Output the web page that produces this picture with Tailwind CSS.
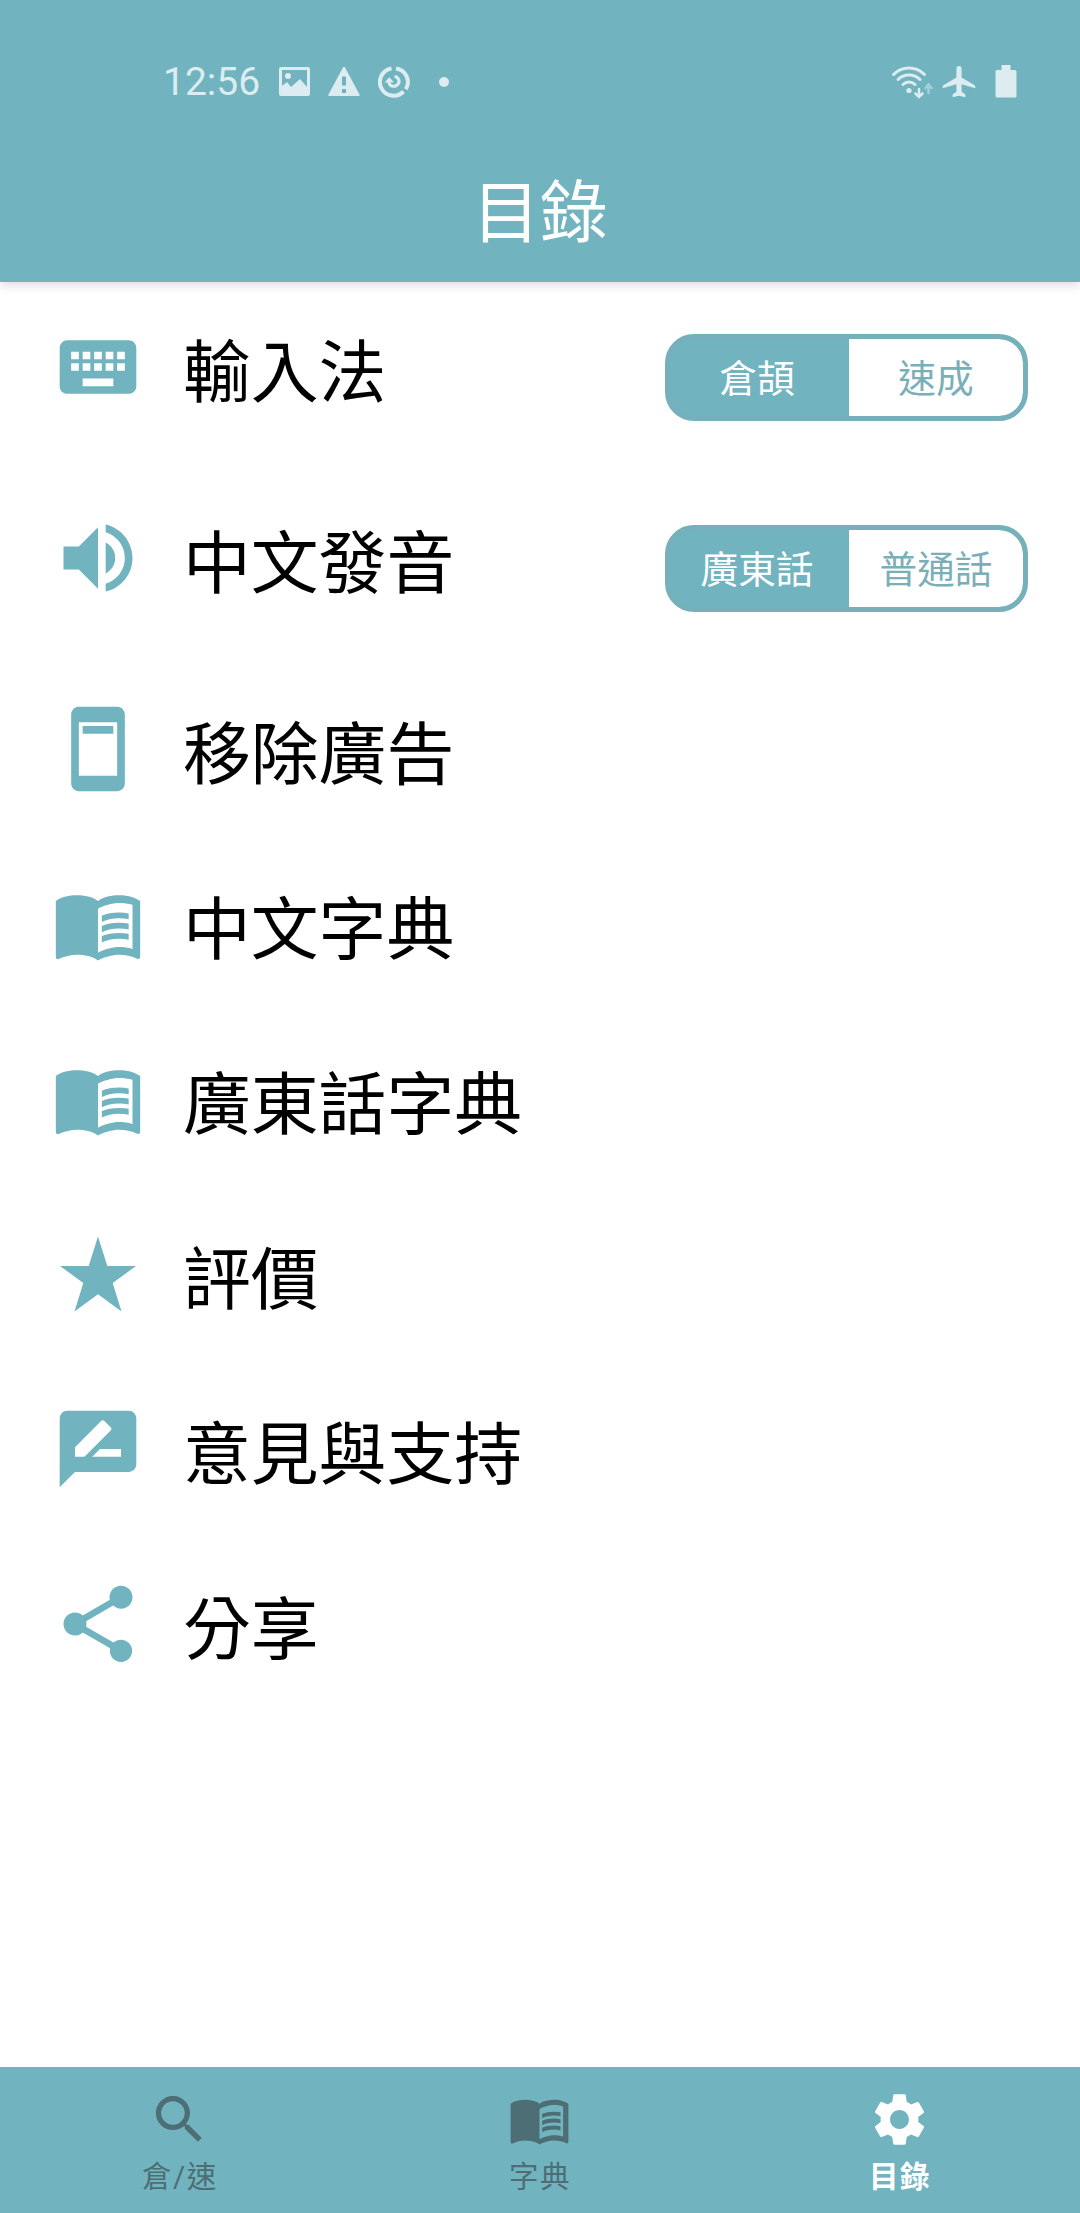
<!DOCTYPE html>
<html lang="zh-Hant">
<head>
  <meta charset="UTF-8" />
  <meta name="viewport" content="width=device-width, initial-scale=1.0" />
  <title>目錄</title>

  <script src="https://cdn.jsdelivr.net/npm/@tailwindcss/browser@4"></script>

  <style>
    body {
      font-family: Roboto, 'Noto Sans CJK TC', sans-serif;
    }
  </style>
</head>
<body class="bg-white">

  <!-- Shared book icon -->
  <svg class="hidden">
    <symbol id="book" viewBox="0 0 24 24">
      <path d="M21 5c-1.11-.35-2.33-.5-3.5-.5-1.95 0-4.05.4-5.5 1.5-1.45-1.1-3.55-1.5-5.5-1.5S2.45 4.9 1 6v14.65c0 .25.25.5.5.5.1 0 .15-.05.25-.05C3.1 20.45 5.05 20 6.5 20c1.95 0 4.05.4 5.5 1.5 1.35-.85 3.8-1.5 5.5-1.5 1.65 0 3.35.3 4.75 1.05.1.05.15.05.25.05.25 0 .5-.25.5-.5V6c-.6-.45-1.25-.75-2-1zm0 13.5c-1.1-.35-2.3-.5-3.5-.5-1.7 0-4.15.65-5.5 1.5V8c1.35-.85 3.8-1.5 5.5-1.5 1.2 0 2.4.15 3.5.5v11.5z"/>
      <path d="M17.5 10.5c.88 0 1.73.09 2.5.26V9.24c-.79-.15-1.64-.24-2.5-.24-1.7 0-3.24.29-4.5.83v1.66c1.13-.64 2.7-.99 4.5-.99zM13 12.49v1.66c1.13-.64 2.7-.99 4.5-.99.88 0 1.73.09 2.5.26V11.9c-.79-.15-1.64-.24-2.5-.24-1.7 0-3.24.3-4.5.83zM17.5 14.33c-1.7 0-3.24.29-4.5.83v1.66c1.13-.64 2.7-.99 4.5-.99.88 0 1.73.09 2.5.26v-1.52c-.79-.16-1.64-.24-2.5-.24z"/>
    </symbol>
  </svg>

  <div class="flex h-[2213px] w-[1080px] flex-col overflow-hidden">

    <header class="h-[282px] shrink-0 bg-[#71b4bf] text-white shadow-[0_3px_10px_rgba(0,0,0,0.15)]">
      <!-- Status bar -->
      <div class="flex h-[140px] items-start justify-between pt-[60px] pr-[63px] pl-[163px] text-[#dcecf1]">
        <div class="flex h-11 items-center">
          <span class="w-[116px] text-[39px] leading-none">12:56</span>
          <svg class="h-[30px] w-[31px]" viewBox="0 0 31 30" fill="currentColor">
            <path fill-rule="evenodd" d="M2 0h27a2 2 0 0 1 2 2v25a2 2 0 0 1-2 2H2a2 2 0 0 1-2-2V2a2 2 0 0 1 2-2zM3 3v16l5-4 4 5 9-8 7 8V3zM9 6a3 3 0 1 1 0 6a3 3 0 0 1 0-6z"/>
          </svg>
          <svg class="ml-[18px] h-[30px] w-[32px]" viewBox="0 0 32 30" fill="currentColor">
            <path fill-rule="evenodd" d="M16 0c.6 0 1 .4 1.300 1L31.500 27.500c.5.9.2 1.500-.8 1.500H1.300c-1 0-1.300-.6-.8-1.500L14.700 1c.3-.6.7-1 1.300-1zM14 9.500v9h4v-9zM14 22v4h4v-4z"/>
          </svg>
          <svg class="ml-[18px] h-8 w-8" viewBox="0 0 32 32" fill="none" stroke="currentColor">
            <path d="M13.500 2.500A13.700 13.700 0 1 0 25.500 25.500" stroke-width="4"/>
            <path d="M18 2.500A13.700 13.700 0 0 1 27.800 23.200" stroke-width="4"/>
            <path d="M16.500 10.500c3.500.3 6 4.500 3.500 7.800c-2.500 3-7.500 2.500-8.700-.8c-.3-.8-.4-1.700-.2-2.800" stroke-width="3.200"/>
            <path d="M6.500 16.500l4.800-5.300 4.700 5z" fill="currentColor" stroke="none"/>
          </svg>
          <span class="ml-[29px] size-[10px] rounded-full bg-[#dcecf1]"></span>
        </div>
        <div class="flex h-11 items-center">
          <svg class="h-[34px] w-[43px]" viewBox="0 0 43 34" fill="none" stroke="currentColor" stroke-width="3" stroke-linecap="round">
            <path d="M2.500 9.500C11 .8 25 .8 33.500 9.500M7 14.500c6-6 16-6 22 0M12 19.500c3.500-3.500 8.500-3.500 12 0"/>
            <circle cx="18" cy="25.500" r="2.600" fill="currentColor" stroke="none"/>
            <path d="M28 24v7M24.500 28.500l3.500 3.500 3.500-3.500" stroke-width="2.500"/>
            <path d="M37.500 28v-7M34.500 23l3-3.500 3 3.500" stroke-width="2.500" opacity=".5"/>
          </svg>
          <svg class="ml-[8px] h-8 w-[34px]" viewBox="0 0 34 32" fill="currentColor">
            <path d="M17 0c1.700 0 2.600 1.300 2.600 3v8.500L32.200 19c.8.5 1.100 1 1.100 2v1.200L19.600 18.300v7.500l3.800 2.800v2.600L17 29.800l-6.400 1.400v-2.600l3.800-2.800v-7.500L.7 22.200V21c0-1 .3-1.500 1.100-2l12.600-7.500V3c0-1.700.9-3 2.600-3z"/>
          </svg>
          <svg class="ml-[19px] h-[34px] w-[22px]" viewBox="0 0 22 34" fill="currentColor">
            <path d="M6.500 0h9v5H20a1.500 1.500 0 0 1 1.500 1.500V31A1.500 1.500 0 0 1 20 32.500H2A1.500 1.500 0 0 1 .5 31V6.500A1.500 1.500 0 0 1 2 5h4.500z"/>
          </svg>
        </div>
      </div>
      <h1 class="pt-[3px] text-center text-[67.8px] leading-[142px]">目錄</h1>
    </header>

    <!-- Menu -->
    <main class="flex-1 pt-[39px] pr-[52px] pl-[52px] text-[67.8px] leading-[92px] text-black">
      <div class="flex h-[191px] items-start">
        <svg class="size-[92px] text-[#71b4bf]" viewBox="0 0 24 24" fill="currentColor"><path d="M20 5H4c-1.100 0-1.990.9-1.990 2L2 17c0 1.100.9 2 2 2h16c1.100 0 2-.9 2-2V7c0-1.100-.9-2-2-2zm-9 3h2v2h-2V8zm0 3h2v2h-2v-2zM8 8h2v2H8V8zm0 3h2v2H8v-2zm-1 2H5v-2h2v2zm0-3H5V8h2v2zm9 7H8v-2h8v2zm0-4h-2v-2h2v2zm0-3h-2V8h2v2zm3 3h-2v-2h2v2zm0-3h-2V8h2v2z"/></svg>
        <span class="mt-[7px] ml-[39px] flex-1">輸入法</span>
        <div class="mt-[13px] flex h-[87px] w-[363px] overflow-hidden rounded-[29px] border-[5px] border-[#76b1bb] bg-[#71b4bf] text-center text-[37.7px] leading-[81px]">
          <div class="w-[179px] pr-[5px] text-white">倉頡</div>
          <div class="flex-1 rounded-r-[24px] bg-white text-[#7bafb8]">速成</div>
        </div>
      </div>
      <div class="flex h-[191px] items-start">
        <svg class="size-[92px] text-[#71b4bf]" viewBox="0 0 24 24" fill="currentColor"><path d="M3 9v6h4l5 5V4L7 9H3zm13.500 3c0-1.770-1.020-3.290-2.500-4.030v8.050c1.480-.73 2.500-2.250 2.500-4.020zM14 3.230v2.060c2.890.86 5 3.540 5 6.710s-2.110 5.850-5 6.710v2.060c4.010-.91 7-4.490 7-8.770s-2.990-7.860-7-8.770z"/></svg>
        <span class="mt-[7px] ml-[39px] flex-1">中文發音</span>
        <div class="mt-[13px] flex h-[87px] w-[363px] overflow-hidden rounded-[29px] border-[5px] border-[#76b1bb] bg-[#71b4bf] text-center text-[37.7px] leading-[81px]">
          <div class="w-[179px] pr-[5px] text-white">廣東話</div>
          <div class="flex-1 rounded-r-[24px] bg-white text-[#7bafb8]">普通話</div>
        </div>
      </div>
      <div class="flex h-[175px] items-start">
        <svg class="size-[92px] text-[#71b4bf]" viewBox="0 0 24 24" fill="currentColor"><path d="M17 1H7c-1.100 0-2 .9-2 2v18c0 1.100.9 2 2 2h10c1.100 0 2-.9 2-2V3c0-1.100-.9-2-2-2zm0 18H7V5h10v14zM8 6h8v2H8V6z"/></svg>
        <span class="mt-[7px] ml-[39px]">移除廣告</span>
      </div>
      <div class="flex h-[175px] items-start">
        <svg class="size-[92px] fill-[#71b4bf]"><use href="#book"/></svg>
        <span class="mt-[7px] ml-[39px]">中文字典</span>
      </div>
      <div class="flex h-[175px] items-start">
        <svg class="size-[92px] fill-[#71b4bf]"><use href="#book"/></svg>
        <span class="mt-[7px] ml-[39px]">廣東話字典</span>
      </div>
      <div class="flex h-[175px] items-start">
        <svg class="size-[92px] text-[#71b4bf]" viewBox="-46 -46 92 92" fill="currentColor"><path d="M0-37.500L9.300-8H38L14.700 9 23.500 37.500 0 20.300-23.500 37.500-14.700 9-38-8h28.700z"/></svg>
        <span class="mt-[7px] ml-[39px]">評價</span>
      </div>
      <div class="flex h-[175px] items-start">
        <svg class="size-[92px] text-[#71b4bf]" viewBox="0 0 24 24" fill="currentColor"><path d="M20 2H4c-1.100 0-1.990.9-1.990 2L2 22l4-4h14c1.100 0 2-.9 2-2V4c0-1.100-.9-2-2-2zM6 14v-2.470l6.880-6.880c.2-.2.51-.2.71 0l1.770 1.770c.2.2.2.51 0 .71L8.470 14H6zm12 0h-7.500l2-2H18v2z"/></svg>
        <span class="mt-[7px] ml-[39px]">意見與支持</span>
      </div>
      <div class="flex h-[175px] items-start">
        <svg class="size-[92px] text-[#71b4bf]" viewBox="0 0 24 24" fill="currentColor"><path d="M18 16.080c-.76 0-1.440.3-1.960.77L8.910 12.700c.05-.23.09-.46.09-.7s-.04-.47-.09-.7l7.050-4.110c.54.5 1.250.81 2.040.81 1.660 0 3-1.340 3-3s-1.340-3-3-3-3 1.340-3 3c0 .24.04.47.09.7L8.040 9.810C7.500 9.310 6.790 9 6 9c-1.660 0-3 1.340-3 3s1.340 3 3 3c.79 0 1.500-.31 2.040-.81l7.120 4.160c-.05.21-.08.43-.08.65 0 1.610 1.310 2.920 2.920 2.920 1.610 0 2.920-1.310 2.920-2.920s-1.310-2.920-2.920-2.920z"/></svg>
        <span class="mt-[7px] ml-[39px]">分享</span>
      </div>
    </main>

    <!-- Bottom navigation -->
    <nav class="grid h-[146px] shrink-0 grid-cols-3 bg-[#71b4bf] pt-[21px] text-[29.5px] leading-[40px] tracking-[1.6px] text-[#4d6e74]">
      <a class="flex flex-col items-center">
        <svg class="mr-px size-[63px]" viewBox="0 0 24 24" fill="currentColor"><path d="M15.500 14h-.79l-.28-.27C15.410 12.590 16 11.110 16 9.500 16 5.910 13.090 3 9.500 3S3 5.910 3 9.500 5.910 16 9.500 16c1.610 0 3.090-.59 4.230-1.570l.27.28v.79l5 4.990L20.490 19l-4.990-5zm-6 0C7.010 14 5 11.990 5 9.500S7.010 5 9.500 5 14 7.010 14 9.500 11.990 14 9.500 14z"/></svg>
        <span class="mt-[6px]">倉/速</span>
      </a>
      <a class="flex flex-col items-center">
        <svg class="mr-px size-[63px] fill-[#4d6e74]"><use href="#book"/></svg>
        <span class="mt-[6px]">字典</span>
      </a>
      <a class="flex flex-col items-center text-white">
        <svg class="mr-px size-[63px]" viewBox="0 0 24 24" fill="currentColor"><path d="M19.140 12.940c.04-.3.06-.61.06-.94 0-.32-.02-.64-.07-.94l2.030-1.580c.18-.14.23-.41.12-.61l-1.920-3.320c-.12-.22-.37-.29-.59-.22l-2.390.96c-.5-.38-1.030-.7-1.620-.94l-.36-2.540c-.04-.24-.24-.41-.48-.41h-3.840c-.24 0-.43.17-.47.41l-.36 2.540c-.59.24-1.130.57-1.620.94l-2.390-.96c-.22-.08-.47 0-.59.22L2.740 8.870c-.12.21-.08.47.12.61l2.030 1.580c-.05.3-.09.63-.09.94s.02.64.07.94l-2.030 1.580c-.18.14-.23.41-.12.61l1.920 3.320c.12.22.37.29.59.22l2.390-.96c.5.38 1.030.7 1.620.94l.36 2.540c.05.24.24.41.48.41h3.840c.24 0 .44-.17.47-.41l.36-2.540c.59-.24 1.130-.56 1.620-.94l2.390.96c.22.08.47 0 .59-.22l1.920-3.320c.12-.22.07-.47-.12-.61l-2.010-1.580zM12 15.600c-1.980 0-3.600-1.620-3.600-3.600s1.620-3.600 3.600-3.600 3.600 1.620 3.600 3.600-1.620 3.600-3.600 3.600z"/></svg>
        <span class="mt-[6px] font-bold">目錄</span>
      </a>
    </nav>

  </div>
</body>
</html>
